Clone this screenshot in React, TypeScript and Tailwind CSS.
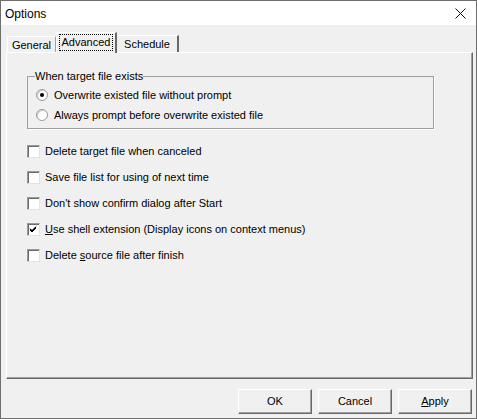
import React from "react";

const font = { fontFamily: '"Liberation Sans", Arial, sans-serif' };

function Check({ checked }: { checked?: boolean }) {
  return (
    <div className="w-[13px] h-[13px] bg-white border-t border-l border-[#9a9a9a] border-b border-r border-b-[#e3e3e3] border-r-[#e3e3e3] shadow-[inset_1px_1px_0_#6b6b6b] flex items-center justify-center shrink-0">
      {checked && (
        <svg width="9" height="9" viewBox="0 0 9 9">
          <path d="M1 4 L3 6 L7 2 M1 5 L3 7 L7 3 M1 3.5 L3 5.5 L7 1.5" stroke="#000" strokeWidth="1" fill="none" />
        </svg>
      )}
    </div>
  );
}

function Radio({ on }: { on?: boolean }) {
  return (
    <div className="w-[12px] h-[12px] rounded-full bg-white border border-[#9a9a9a] shadow-[inset_1px_1px_0_#cfcfcf] flex items-center justify-center shrink-0">
      {on && <div className="w-[4px] h-[4px] rounded-full bg-black" />}
    </div>
  );
}

function Btn({ children }: { children: React.ReactNode }) {
  return (
    <div className="w-[74px] h-[25px] bg-[#f0f0f0] border border-t-white border-l-white border-b-[#696969] border-r-[#696969] shadow-[inset_-1px_-1px_0_#a0a0a0] flex items-center justify-center text-[11px] text-black">
      {children}
    </div>
  );
}

export default function App() {
  const rows: React.ReactNode[] = [
    "Delete target file when canceled",
    "Save file list for using of next time",
    "Don't show confirm dialog after Start",
    <>
      <span className="underline">U</span>se shell extension (Display icons on context menus)
    </>,
    <>
      Delete <span className="underline">s</span>ource file after finish
    </>,
  ];
  return (
    <div
      className="w-[477px] h-[419px] border border-[#6e6e6e] bg-[#f0f0f0] flex flex-col text-black overflow-hidden"
      style={font}
    >
      <div className="h-[24px] bg-white flex items-center justify-between pl-[4px] pr-[10px] shrink-0">
        <span className="text-[12px] mt-[1px]">Options</span>
        <svg width="11" height="11" viewBox="0 0 11 11">
          <path d="M0.5 0.5 L10.5 10.5 M10.5 0.5 L0.5 10.5" stroke="#111" strokeWidth="1" />
        </svg>
      </div>

      <div className="flex items-end h-[27px] pl-[6px] shrink-0 text-[11px]">
        <div className="w-[49px] h-[16px] border-t border-l border-white border-r border-r-[#a0a0a0] flex items-center justify-center pt-[1px]">
          General
        </div>
        <div className="relative z-10 w-[61px] h-[21px] -mb-[1px] bg-[#f0f0f0] border-t border-l border-white border-r-2 border-r-[#696969] flex items-start justify-center pt-[1px]">
          <span className="border border-dotted border-black px-[2px] leading-[15px]">Advanced</span>
        </div>
        <div className="w-[62px] h-[17px] border-t border-white border-r-2 border-r-[#696969] flex items-center justify-center pt-[1px]">
          Schedule
        </div>
      </div>

      <div className="ml-[5px] w-[467px] h-[327px] border-t border-l border-white border-r border-b border-r-[#696969] border-b-[#696969] shadow-[inset_-1px_-1px_0_#a0a0a0] text-[11px] shrink-0">
        <fieldset className="ml-[20px] mt-[16px] w-[407px] h-[60px] border border-[#a0a0a0] shadow-[1px_1px_0_#ffffff] pl-[7px] pr-0 pt-[5px] pb-0">
          <legend className="px-0 leading-[14px]">When target file exists</legend>
          <div className="flex items-center gap-[6px] h-[14px] mt-[0px] pl-[1px]">
            <Radio on />
            <span>Overwrite existed file without prompt</span>
          </div>
          <div className="flex items-center gap-[6px] h-[14px] mt-[6px] pl-[1px]">
            <Radio />
            <span>Always prompt before overwrite existed file</span>
          </div>
        </fieldset>
        <div className="flex flex-col gap-[13px] ml-[20px] mt-[16px]">
          {rows.map((r, i) => (
            <div key={i} className="flex items-center gap-[5px] h-[13px]">
              <Check checked={i === 3} />
              <span className="leading-[13px]">{r}</span>
            </div>
          ))}
        </div>
      </div>

      <div className="flex justify-end gap-[6px] pr-[4px] mt-[10px]">
        <Btn>OK</Btn>
        <Btn>Cancel</Btn>
        <Btn>
          <span className="underline">A</span>pply
        </Btn>
      </div>
    </div>
  );
}
